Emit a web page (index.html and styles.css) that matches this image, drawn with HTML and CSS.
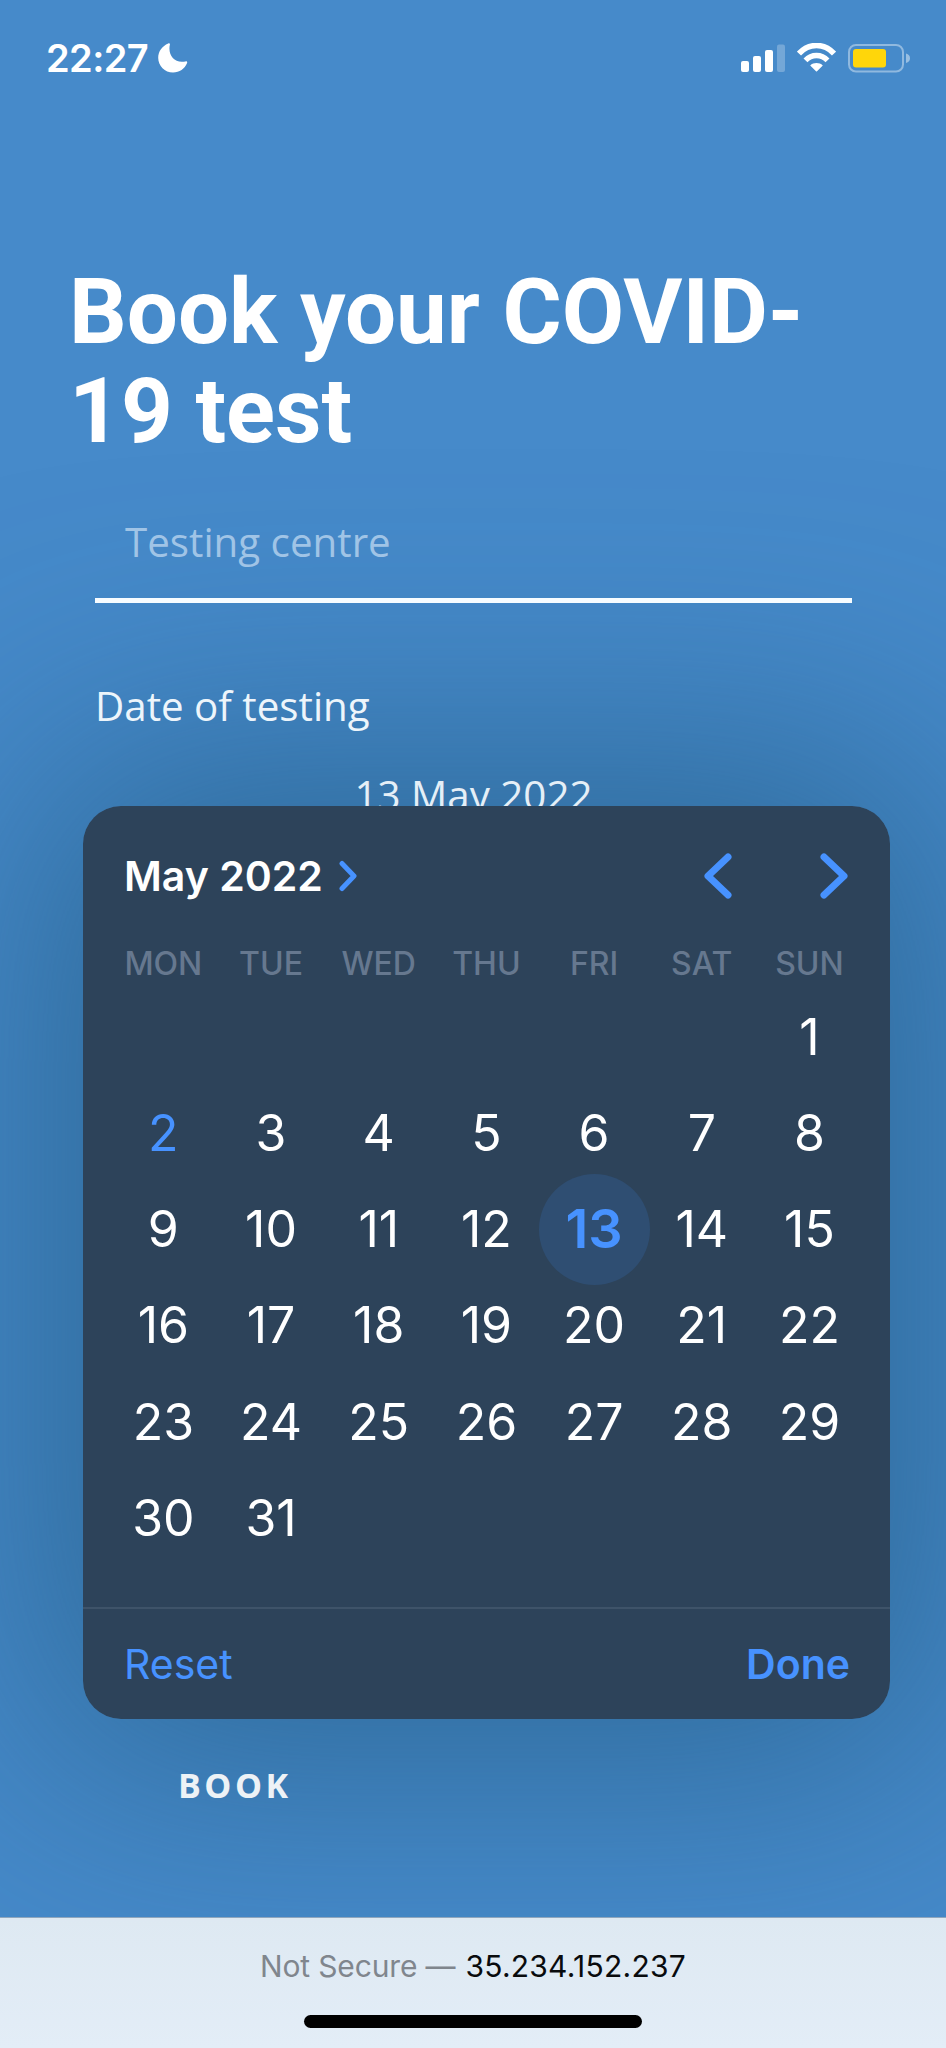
FILE: index.html
```html
<!DOCTYPE html>
<html lang="en">
<head>
<meta charset="utf-8">
<title>Book your COVID-19 test</title>
<link rel="stylesheet" href="styles.css">
</head>
<body>
<div class="screen">
  <div class="picker-shadow"></div>
  <header class="status">
    <span class="clock">22:27</span>
    <svg class="moon" width="30" height="30" viewBox="0 0 30 30"><path d="M10.2.4C11.2-.1 12.2.4 11.9 1.5 9.5 11.800 16.500 21 27.500 18.400 28.700 18.100 29.500 18.900 29.100 20.100 26.700 26 21.500 29.600 15 29.600 6.800 29.600.2 23 .2 14.800.2 8.200 4.200 2.900 10.200.4Z" fill="#fff"/></svg>
    <span class="indicators">
      <svg width="44" height="30" viewBox="0 0 44 30" fill="#fff"><rect y="18" width="8" height="11" rx="2"/><rect x="12" y="13" width="8" height="16" rx="2"/><rect x="24" y="7" width="8" height="22" rx="2"/><rect x="36" y="1.500" width="8" height="27.500" rx="2" opacity=".25"/></svg>
      <svg width="39" height="30" viewBox="0 0 39 30"><g fill="none" stroke="#fff"><path d="M2 10.500C12-.2 27-.2 37 10.500" stroke-width="5.600"/><path d="M8.500 17.300C14.500 10.800 24.500 10.800 30.500 17.300" stroke-width="5.400"/></g><path d="M13.200 22.500C16.500 19.300 22.500 19.300 25.800 22.500L20 28.300Q19.500 28.800 19 28.300Z" fill="#fff"/></svg>
      <svg width="62" height="30" viewBox="0 0 62 30"><rect x="1" y="2" width="54" height="26.500" rx="7" fill="none" stroke="#fff" stroke-opacity=".4" stroke-width="2"/><rect x="5" y="6" width="33" height="18.500" rx="3" fill="#ffd60a"/><path d="M58 10.500Q62 11.500 62 15.300T58 20Z" fill="#fff" opacity=".45"/></svg>
    </span>
  </header>
  <main class="content">
    <h1 class="title">Book your COVID-<br>19 test</h1>
    <form class="form">
      <div class="field">Testing centre</div>
      <div class="label">Date of testing</div>
      <div class="date">13 May 2022</div>
      <div class="book">BOOK</div>
    </form>
  </main>
  <footer class="address">
    <div class="site"><span class="insecure">Not Secure —</span><span class="host">35.234.152.237</span></div>
    <div class="home"></div>
  </footer>
  <section class="picker">
    <div class="picker-head">
      <span class="month">May 2022</span>
      <svg width="18" height="32" viewBox="0 0 18 32"><path class="chevron thin" d="M3 3.500 15 16 3 28.500"/></svg>
      <svg class="prev" width="28" height="46" viewBox="0 0 28 46"><path class="chevron" d="M24 4 4 23 24 42"/></svg>
      <svg width="28" height="46" viewBox="0 0 28 46"><path class="chevron" d="M4 4 24 23 4 42"/></svg>
    </div>
    <div class="weekdays"><span>MON</span><span>TUE</span><span>WED</span><span>THU</span><span>FRI</span><span>SAT</span><span>SUN</span></div>
    <div class="days">
      <span class="first">1</span>
      <span class="today">2</span><span>3</span><span>4</span><span>5</span><span>6</span><span>7</span><span>8</span>
      <span>9</span><span>10</span><span>11</span><span>12</span><span class="selected"><b>13</b></span><span>14</span><span>15</span>
      <span>16</span><span>17</span><span>18</span><span>19</span><span>20</span><span>21</span><span>22</span>
      <span>23</span><span>24</span><span>25</span><span>26</span><span>27</span><span>28</span><span>29</span>
      <span>30</span><span>31</span>
    </div>
    <div class="actions"><span class="reset">Reset</span><span class="done">Done</span></div>
  </section>
</div>
</body>
</html>
```
FILE: styles.css
```css
* { box-sizing: border-box; }
body { margin: 0; }
.screen {
  position: relative;
  display: flex;
  flex-direction: column;
  width: 946px;
  height: 2048px;
  overflow: hidden;
  background: #468aca;
  color: #fff;
  font-family: Inter, "Liberation Sans", sans-serif;
  white-space: nowrap;
}
.status { display: flex; align-items: center; height: 116px; padding: 0 36px 0 46px; }
.clock { width: 112px; font-size: 38px; font-weight: 600; line-height: 46px; letter-spacing: -.6px; }
.moon { flex: none; }
.indicators { display: flex; gap: 12px; margin-left: auto; }
.content, .address { position: relative; z-index: 1; }
.content { flex: 1; padding: 147px 94px 0 69px; }
.title { margin: 0; font: 700 90.6px/98.5px Roboto, sans-serif; }
.form { margin-left: 26px; padding-top: 40px; font-family: "Open Sans", sans-serif; font-size: 40.3px; }
.field { height: 103px; padding: 10px 30px 0; border-bottom: 5px solid #f7fcff; color: #a0c4e6; line-height: 64px; font-weight: 400; }
.label { margin-top: 71px; line-height: 64px; color: #edf5fb; }
.date { margin-top: 25px; line-height: 64px; text-align: center; color: #e5eff7; }
.book { margin-top: 934px; padding-left: 83px; font-size: 34px; font-weight: 700; line-height: 48px; letter-spacing: 3.500px; color: #edf2f6; }
.address {
  display: flex;
  flex-direction: column;
  align-items: center;
  height: 131px;
  border-top: 1px solid #8fa6bd;
  background: linear-gradient(#dee9f2, #e3edf7);
}
.site { display: flex; gap: 10px; margin-top: 30px; font-size: 30px; line-height: 36px; }
.insecure { color: #80868d; letter-spacing: -.15px; }
.host { color: #090b0d; letter-spacing: .25px; }
.home { width: 338px; height: 13px; margin-top: 31px; border-radius: 7px; background: #000; }
.picker, .picker-shadow {
  position: absolute;
  top: 806px;
  left: 83px;
  width: 807px;
  height: 913px;
  border-radius: 38px;
}
.picker { z-index: 2; background: #2d435a; }
.picker-shadow { box-shadow: 0 0 270px 50px rgba(38, 94, 136, .72); }
.picker-head { display: flex; align-items: center; height: 140px; padding: 0 42px 0 41px; }
.month { margin-right: 16px; font-size: 41px; font-weight: 600; }
.prev { margin: 0 88px 0 auto; }
.chevron { fill: none; stroke: #4792ff; stroke-width: 7; stroke-linecap: round; stroke-linejoin: round; }
.thin { stroke-width: 5; }
.weekdays, .days { display: grid; grid-template-columns: repeat(7, 107.7px); margin-left: 26.500px; text-align: center; }
.weekdays { font-size: 32px; font-weight: 500; line-height: 36px; color: #66788f; }
.days { grid-auto-rows: 96.3px; margin-top: 6.500px; font-size: 50px; line-height: 96px; }
.first { grid-column: 7; }
.today { color: #4792ff; }
.selected { display: flex; align-items: center; justify-content: center; color: #4792ff; font-size: 54px; }
.selected b { flex: none; width: 111px; height: 111px; border-radius: 50%; background: #2f4e72; font-weight: 600; line-height: 110px; }
.actions {
  display: flex;
  justify-content: space-between;
  height: 112px;
  margin-top: 40.500px;
  padding: 0 40px 0 41px;
  border-top: 2px solid #3e5369;
  color: #4792ff;
  font-size: 41px;
  line-height: 110px;
}
.done { font-weight: 600; }
```
